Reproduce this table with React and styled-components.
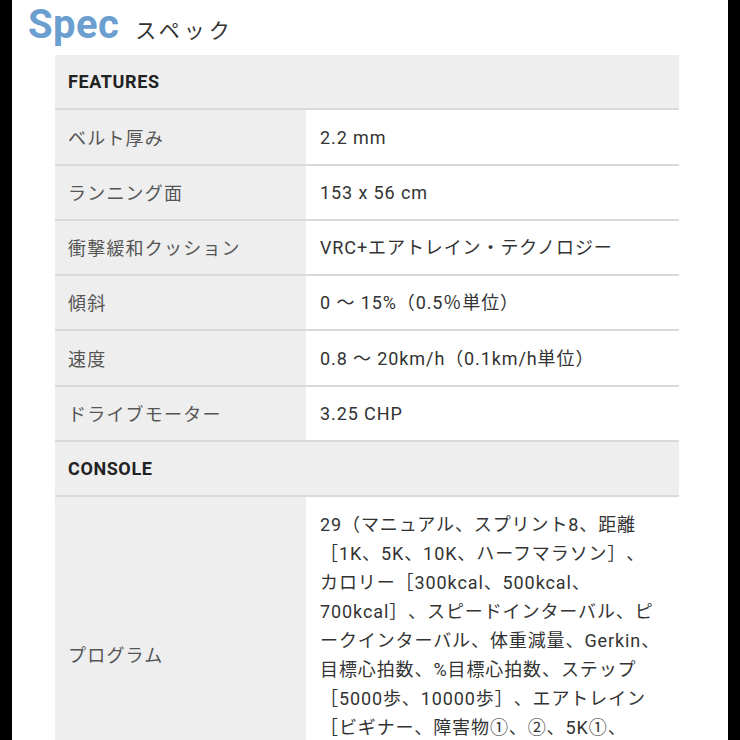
import React from "react";
import styled, { createGlobalStyle } from "styled-components";

const Global = createGlobalStyle`
  html, body { margin: 0; padding: 0; background: #000; }
  body { font-family: Roboto, "Noto Sans CJK JP", sans-serif; overflow: hidden; }
`;

const Page = styled.main`
  margin: 0 12px;
  background: #fff;
  min-height: 740px;
  padding: 0 49px 0 43px;
`;

const TitleRow = styled.div`
  display: flex;
  align-items: baseline;
  margin-left: -27px;
  height: 55px;
`;

const Title = styled.h2`
  margin: 0;
  font-family: Roboto, sans-serif;
  font-weight: 700;
  font-size: 40px;
  line-height: 50px;
  color: #6b9fcf;
  letter-spacing: 0.4px;
`;

const Sub = styled.span`
  margin-left: 16px;
  font-family: "Noto Sans CJK JP", sans-serif;
  font-weight: 400;
  font-size: 21px;
  letter-spacing: 4px;
  color: #333;
`;

const Table = styled.div`
  display: grid;
  grid-template-columns: 251px 1fr;
  font-size: 18px;
  line-height: 29px;
  letter-spacing: 0.9px;
  text-spacing-trim: space-all;
`;

const Section = styled.div`
  grid-column: 1 / -1;
  background: #eeeeee;
  padding: 12.3px 13px 12px;
  font-weight: 700;
  color: #222;
  font-family: Roboto, sans-serif;
  letter-spacing: 0.6px;
  border-bottom: 2px solid #dadada;
`;

const Label = styled.div`
  background: #eeeeee;
  color: #555;
  padding: 12.3px 13px 12px;
  display: flex;
  align-items: center;
  border-bottom: 2px solid #dadada;
  font-family: "Noto Sans CJK JP", sans-serif;
  font-weight: 400;
  letter-spacing: 1.2px;
`;

const Value = styled.div`
  background: #fff;
  color: #333;
  padding: 12.3px 16px 12px 14px;
  border-bottom: 2px solid #dadada;
  font-family: Roboto, "Noto Sans CJK JP", sans-serif;
`;

const features = [
  ["ベルト厚み", "2.2 mm"],
  ["ランニング面", "153 x 56 cm"],
  ["衝撃緩和クッション", "VRC+エアトレイン・テクノロジー"],
  ["傾斜", "0 ～ 15%（0.5％単位）"],
  ["速度", "0.8 ～ 20km/h（0.1km/h単位）"],
  ["ドライブモーター", "3.25 CHP"],
];

const consoleRows = [
  [
    "プログラム",
    "29（マニュアル、スプリント8、距離［1K、5K、10K、ハーフマラソン］、カロリー［300kcal、500kcal、700kcal］、スピードインターバル、ピークインターバル、体重減量、Gerkin、目標心拍数、%目標心拍数、ステップ［5000歩、10000歩］、エアトレイン［ビギナー、障害物①、②、5K①、②、10K①、②］、ユーザープログラム2、心拍数コントロール2）",
  ],
];

export default function App() {
  return (
    <>
      <Global />
      <Page>
        <TitleRow>
          <Title>Spec</Title>
          <Sub>スペック</Sub>
        </TitleRow>
        <Table>
          <Section>FEATURES</Section>
          {features.map(([k, v]) => (
            <React.Fragment key={k}>
              <Label>{k}</Label>
              <Value>{v}</Value>
            </React.Fragment>
          ))}
          <Section>CONSOLE</Section>
          {consoleRows.map(([k, v]) => (
            <React.Fragment key={k}>
              <Label>{k}</Label>
              <Value>{v}</Value>
            </React.Fragment>
          ))}
        </Table>
      </Page>
    </>
  );
}
